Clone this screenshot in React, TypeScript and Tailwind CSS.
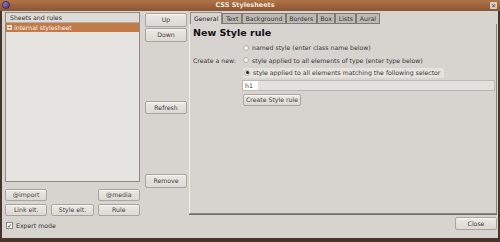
import React from "react";

const Btn: React.FC<{ label: string; className?: string }> = ({ label, className = "" }) => (
  <div
    className={`flex items-center justify-center rounded-[2px] border border-[#aaa49c] bg-gradient-to-b from-[#ece9e5] to-[#dcd8d3] text-[#3e3e3e] shadow-[inset_0_1px_0_#f7f5f3] ${className}`}
  >
    {label}
  </div>
);

const Radio: React.FC<{ on?: boolean }> = ({ on }) => (
  <span className="flex h-[6px] w-[6px] items-center justify-center rounded-full border border-[#b4afa8] bg-[#f3f1ee]">
    {on && <span className="h-[3px] w-[3px] rounded-full bg-[#222]" />}
  </span>
);

const tabs = ["General", "Text", "Background", "Borders", "Box", "Lists", "Aural"];

const App: React.FC = () => {
  return (
    <div className="flex h-[242px] w-[500px] flex-col bg-[#45352a] font-['DejaVu_Sans',sans-serif] text-[6.2px] text-[#383838]">
      {/* Title bar */}
      <div className="relative flex h-[11px] items-center justify-center bg-gradient-to-b from-[#b07446] to-[#8a5634]">
        <span className="absolute left-[2px] top-[1px] h-[8px] w-[8px] rounded-full bg-gradient-to-br from-[#a38ad0] to-[#4b2d8a] border border-[#3a2a5a]" />
        <span className="text-[6.5px] font-bold text-[#f1e6dc] pr-[10px]">CSS Stylesheets</span>
        <span className="absolute right-[3px] top-[2px] flex h-[7px] w-[7px] items-center justify-center rounded-[1px] bg-[#d9cfc6] text-[6px] font-bold leading-none text-[#5a3a24]">
          ✕
        </span>
      </div>

      {/* Body */}
      <div className="mx-[2px] mb-[4px] flex flex-1 bg-[#d7d3ce]">
        {/* Left column */}
        <div className="ml-[3px] mt-[1px] flex w-[135px] flex-col">
          <div className="flex h-[170px] flex-col border border-[#8e8a84] bg-[#e6e4e1]">
            <div className="flex h-[10px] items-center border-b border-[#b3aea7] bg-[#dedad5] pl-[4px] text-[#333]">
              Sheets and rules
            </div>
            <div className="flex h-[9px] items-center bg-[#c27a47] pl-[1px] text-[#fbf2ea]">
              <span className="mr-[2px] flex h-[5px] w-[5px] items-center justify-center border border-[#e9d8ca] bg-[#efe3d8] text-[4px] leading-none text-[#6a4a34]">
                +
              </span>
              internal stylesheet
            </div>
          </div>
          <div className="mt-[7px] grid grid-cols-3 gap-x-[4px] gap-y-[3px]">
            <Btn label="@import" className="h-[12px]" />
            <div />
            <Btn label="@media" className="h-[12px]" />
            <Btn label="Link elt." className="h-[12px]" />
            <Btn label="Style elt." className="h-[12px]" />
            <Btn label="Rule" className="h-[12px]" />
          </div>
          <div className="mt-[5px] flex items-center pl-[1px]">
            <span className="flex h-[7px] w-[7px] items-center justify-center border border-[#8e8a84] bg-[#f4f2ef] text-[6px] font-bold leading-none text-[#111]">
              ✓
            </span>
            <span className="ml-[3px]">Expert mode</span>
          </div>
        </div>

        {/* Middle buttons */}
        <div className="ml-[5px] flex w-[42px] flex-col pt-[2px]">
          <Btn label="Up" className="h-[14px]" />
          <Btn label="Down" className="mt-[1px] h-[14px]" />
          <Btn label="Refresh" className="mt-[59px] h-[13px]" />
          <Btn label="Remove" className="mt-[60px] h-[14px]" />
        </div>

        {/* Right notebook */}
        <div className="ml-[2px] mr-[1px] flex flex-1 flex-col">
          <div className="mt-[1px] flex h-[12px] items-end pl-[1px]">
            {tabs.map((t, i) =>
              i === 0 ? (
                <div
                  key={t}
                  className="flex h-[12px] items-center border border-b-0 border-[#8e8a84] bg-[#d7d3ce] px-[3px] text-[#222]"
                >
                  {t}
                </div>
              ) : (
                <div
                  key={t}
                  className="flex h-[11px] items-center border border-[#7d7973] bg-[#bdb9b3] px-[2.5px] text-[#333]"
                >
                  {t}
                </div>
              )
            )}
          </div>
          <div className="flex h-[190px] flex-col border border-t-0 border-[#f2efec] border-b-[#8a867f] border-r-[#8a867f] shadow-[0_1px_0_#6f6b65] pl-[3px]">
            <div className="mt-[2px] text-[9.5px] font-bold text-[#111]">New Style rule</div>
            <div className="mt-[3px] flex flex-col gap-y-[3px]">
              <div className="flex items-center pl-[50px]">
                <Radio />
                <span className="ml-[3px]">named style (enter class name below)</span>
              </div>
              <div className="flex items-center">
                <span className="w-[50px]">Create a new:</span>
                <Radio />
                <span className="ml-[3px]">style applied to all elements of type (enter type below)</span>
              </div>
              <div className="ml-[50px] flex h-[10px] w-[201px] items-center bg-[#e5e2de] pl-[1px]">
                <Radio on />
                <span className="ml-[3px]">style applied to all elements matching the following selector</span>
              </div>
            </div>
            <div className="ml-[49px] mr-[1px] mt-[2px] flex h-[11px] items-center border border-[#bdb8b1] bg-[#e3e1de]">
              <span className="flex h-full w-[15px] items-center bg-white pl-[2px]">h1</span>
            </div>
            <Btn label="Create Style rule" className="ml-[50px] mt-[3px] h-[12px] w-[58px]" />
          </div>
          <div className="mt-[3px] flex justify-end">
            <Btn label="Close" className="h-[13px] w-[42px]" />
          </div>
        </div>
      </div>
    </div>
  );
};

export default App;
